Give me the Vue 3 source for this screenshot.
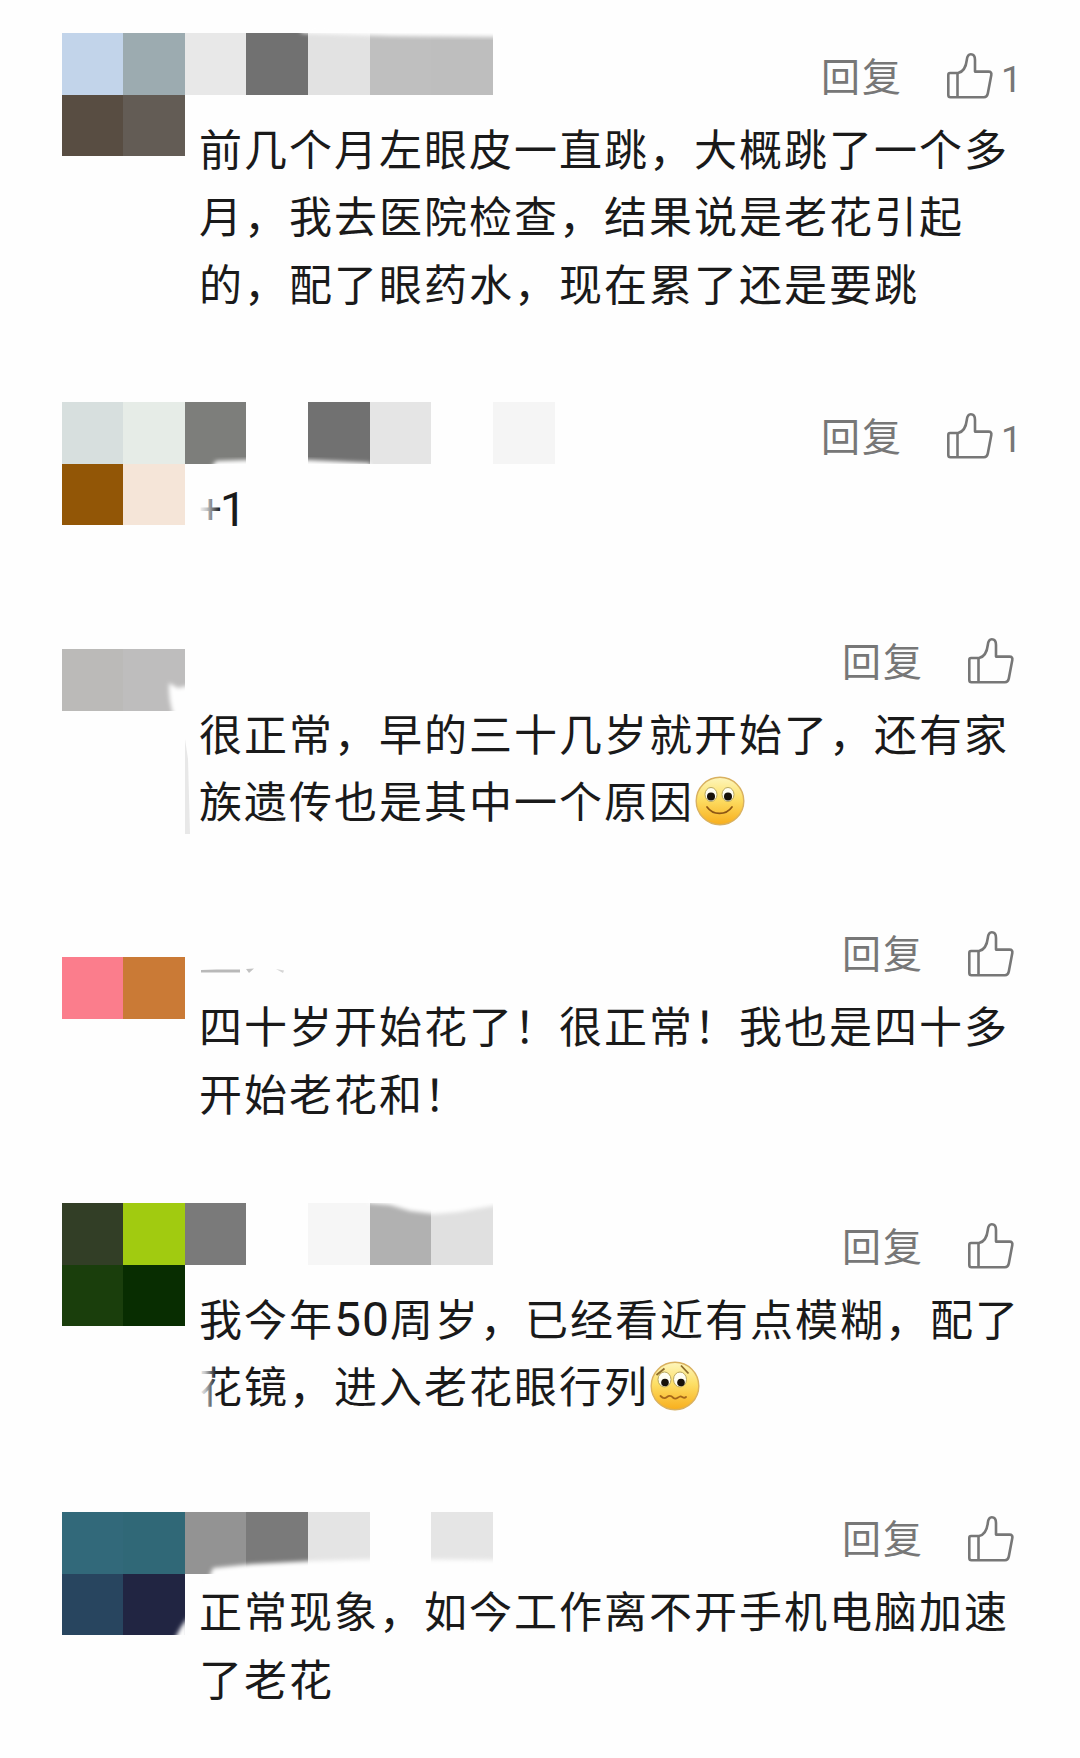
<template>
  <div class="comments">
    <div v-for="comment in comments" :key="comment.id" class="comment">
      <div class="comment-header">
        <span class="reply">回复</span>
        <svg class="icon-like" viewBox="0 0 46 46" fill="none" stroke="currentColor" stroke-width="2.6" stroke-linejoin="round">
          <path d="M3 20H11C16 19 19 14 19.8 7C20.2 3 21.5 1.3 23.8 1.3C26.5 1.3 28 3.500 28 7V18.600H41.500C43.800 18.600 44.700 20 44.300 22L40.800 40.500C40.300 43 39 44.200 37 44.200H3.500C2 44.200 1.300 43.400 1.300 42V22C1.300 20.800 1.800 20 3 20Z" />
          <path d="M10.500 20V44" />
        </svg>
        <span v-if="comment.likes" class="likes">{{ comment.likes }}</span>
      </div>

      <div class="comment-text">
        <div v-for="(line, i) in comment.lines" :key="i" class="line">
          <span v-for="(part, j) in splitDigits(line)" :key="j" :class="partClass(part)">{{ part }}</span>
          <svg v-if="comment.emoji && i === comment.lines.length - 1" class="emoji" viewBox="0 0 50 50" fill="none">
            <defs>
              <linearGradient :id="'face' + comment.id" x1="0" y1="0" x2="0" y2="1">
                <stop offset="0" stop-color="#fdf6bd" />
                <stop offset="0.45" stop-color="#fddf66" />
                <stop offset="1" stop-color="#f8ae1c" />
              </linearGradient>
            </defs>
            <circle cx="25" cy="25" r="23.800" :fill="`url(#face${comment.id})`" stroke="#d9b160" stroke-width="1.400" />
            <template v-if="comment.emoji === 'smile'">
              <ellipse cx="16" cy="18.500" rx="6" ry="7" fill="#fffef2" stroke="#b8a75d" />
              <ellipse cx="33" cy="18.500" rx="6" ry="7" fill="#fffef2" stroke="#b8a75d" />
              <circle cx="16" cy="20.500" r="4" fill="#16110a" />
              <circle cx="33" cy="20.500" r="4" fill="#16110a" />
              <path d="M12 31C18 39.500 31 39.500 37 31" stroke="#8d5615" stroke-width="1.700" stroke-linecap="round" />
            </template>
            <template v-else>
              <ellipse cx="14.500" cy="18.500" rx="6.500" ry="7.500" fill="#fffef2" stroke="#b8a75d" />
              <ellipse cx="30" cy="18.500" rx="6.500" ry="7.500" fill="#fffef2" stroke="#b8a75d" />
              <circle cx="15" cy="21.500" r="3.800" fill="#16110a" />
              <circle cx="31" cy="21.500" r="3.800" fill="#16110a" />
              <path d="M6.500 14L14.500 7.500M31 4.500L38.500 12.500" stroke="#8b6a2b" stroke-width="1.800" />
              <path d="M10.500 35C13 37.500 14.500 38 17 36C19.500 34 21 34.500 23.500 37C26 39 28 36 30 35.500C32.500 35 33.500 38.500 36 36" stroke="#a5671a" stroke-width="1.800" stroke-linecap="round" />
            </template>
          </svg>
        </div>
      </div>

      <!-- Mosaic over the avatar and the user name -->
      <svg class="mosaic" :style="{ top: comment.mosaicTop + 'px' }" viewBox="0 0 500 240">
        <defs>
          <filter :id="'soft' + comment.id" x="-20%" y="-20%" width="140%" height="140%">
            <feGaussianBlur stdDeviation="2" />
          </filter>
          <linearGradient :id="'fade' + comment.id">
            <stop offset="0" stop-color="#fefefe" />
            <stop offset="0.4" stop-color="#fefefe" stop-opacity="0.75" />
            <stop offset="1" stop-color="#fefefe" stop-opacity="0" />
          </linearGradient>
        </defs>
        <g shape-rendering="crispEdges">
          <rect
            v-for="cell in comment.cells"
            :key="cell[0] + '-' + cell[1]"
            :x="edges[cell[0]]"
            :y="cell[1] * 61.500"
            :width="edges[cell[0] + 1] - edges[cell[0]]"
            height="61.500"
            :fill="cell[2]"
          />
        </g>
        <path v-if="comment.wipe" :d="comment.wipe" fill="#fefefe" :filter="`url(#soft${comment.id})`" />
        <rect v-if="comment.fade" v-bind="comment.fade" :fill="`url(#fade${comment.id})`" />
        <path v-for="mark in comment.marks" :key="mark.d" :d="mark.d" :fill="mark.fill" />
      </svg>
    </div>
  </div>
</template>

<script setup>
// Left edges of the mosaic columns
const edges = [0, 61, 123, 184, 246, 308, 369, 431, 493]

// cells: [column, row, color]
const comments = [
  {
    id: 1,
    likes: 1,
    lines: ['前几个月左眼皮一直跳，大概跳了一个多', '月，我去医院检查，结果说是老花引起', '的，配了眼药水，现在累了还是要跳'],
    mosaicTop: -4.5,
    cells: [
      [0, 0, '#c2d4ea'], [1, 0, '#9cabb0'], [2, 0, '#e8e8e8'], [3, 0, '#717171'],
      [4, 0, '#e2e2e2'], [5, 0, '#bfbfbf'], [6, 0, '#bebebe'],
      [0, 1, '#584d42'], [1, 1, '#635c55']
    ],
    wipe: 'M235 -8H440V4L330 3L240 0Z'
  },
  {
    id: 2,
    likes: 1,
    lines: ['+1'],
    mosaicTop: 4.5,
    cells: [
      [0, 0, '#d7dfde'], [1, 0, '#e6ece7'], [2, 0, '#7d7e7b'], [4, 0, '#717171'],
      [5, 0, '#e5e5e5'], [7, 0, '#f5f5f5'],
      [0, 1, '#925606'], [1, 1, '#f5e5d8']
    ],
    wipe: 'M149 66L154 59L184 58H246L308 61L310 72H149Z',
    fade: { x: 136, y: 90, width: 22, height: 42 }
  },
  {
    id: 3,
    likes: 0,
    lines: ['很正常，早的三十几岁就开始了，还有家', '族遗传也是其中一个原因'],
    emoji: 'smile',
    mosaicTop: 26.5,
    cells: [[0, 0, '#bbbab8'], [1, 0, '#bebdbd']],
    wipe: 'M107 34L116 39L129 36V68H112Q106 50 107 34Z',
    marks: [{ d: 'M123 90L126 110L128 185H123Z', fill: '#e8e8e8' }]
  },
  {
    id: 4,
    likes: 0,
    lines: ['四十岁开始花了！很正常！我也是四十多', '开始老花和！'],
    mosaicTop: 42,
    cells: [[0, 0, '#fb7d8c'], [1, 0, '#ca7a36']],
    marks: [
      { d: 'M139 13L155 12.500H178V15.500H139Z', fill: '#b9b9b9' },
      { d: 'M184 12L192 11.500L187 16Z', fill: '#c2c2c2' },
      { d: 'M214 12L222 13.500L221 16Z', fill: '#d6d6d6' }
    ]
  },
  {
    id: 5,
    likes: 0,
    lines: ['我今年50周岁，已经看近有点模糊，配了', '花镜，进入老花眼行列'],
    emoji: 'worried',
    mosaicTop: -4.5,
    cells: [
      [0, 0, '#323e26'], [1, 0, '#a1cb10'], [2, 0, '#7a7a7a'], [4, 0, '#f6f6f6'],
      [5, 0, '#b1b1b1'], [6, 0, '#e0e0e0'],
      [0, 1, '#1a3e0c'], [1, 1, '#082d01']
    ],
    wipe: 'M306 -10V0L328 2L348 8L372 11L396 9L436 2V-10Z',
    fade: { x: 136, y: 158, width: 18, height: 50 }
  },
  {
    id: 6,
    likes: 0,
    lines: ['正常现象，如今工作离不开手机电脑加速', '了老花'],
    mosaicTop: 12,
    cells: [
      [0, 0, '#32697a'], [1, 0, '#306877'], [2, 0, '#939393'], [3, 0, '#7a7a7a'],
      [4, 0, '#e4e4e4'], [6, 0, '#e5e5e5'],
      [0, 1, '#28455f'], [1, 1, '#212542']
    ],
    wipe: 'M145 70L151 56L190 52L250 49L320 47L440 48V70ZM112 128L119 115L126 105V128Z'
  }
]

function splitDigits(line) {
  return line.split(/([0-9]+|\+)/).filter(Boolean)
}

function partClass(part) {
  if (part === '+') return 'plus'
  return /^[0-9]+$/.test(part) ? 'digits' : ''
}
</script>

<style>
body {
  background: #fefefe;
}
</style>

<style scoped>
.comments {
  box-sizing: border-box;
  height: 1758px;
  padding: 37.5px 60px 0 199px;
  overflow: hidden;
  background: #fefefe;
  font-family: 'Noto Sans CJK SC', sans-serif;
}

.comment {
  position: relative;
  padding-bottom: 81.5px;
}

.comment-header {
  display: flex;
  align-items: center;
  justify-content: flex-end;
  height: 76px;
  padding-right: 6px;
  color: #777;
}

.reply {
  margin-top: -3px;
  margin-right: 44px;
  font-size: 39px;
  letter-spacing: 2px;
  line-height: 1;
}

.icon-like {
  width: 46px;
  height: 46px;
  margin-top: 1px;
}

.likes {
  width: 21px;
  margin-top: 7px;
  margin-left: 8px;
  margin-right: -8px;
  font-family: Roboto, sans-serif;
  font-size: 37px;
  line-height: 1;
}

.comment-text {
  color: #1a1a1a;
  font-size: 43px;
  letter-spacing: 2px;
}

.line {
  display: flex;
  align-items: center;
  height: 67.5px;
  line-height: 67.5px;
  white-space: nowrap;
}

.digits {
  margin-top: 4px;
  font-family: Roboto, sans-serif;
  font-size: 48px;
  letter-spacing: 1px;
}

.plus {
  margin-top: 4px;
  margin-right: -2px;
  font-family: Roboto, sans-serif;
  font-size: 40px;
  letter-spacing: 0;
}

.emoji {
  width: 50px;
  height: 50px;
  margin-top: 2px;
  margin-left: 1px;
}

.mosaic {
  position: absolute;
  left: -137px;
  width: 500px;
  height: 240px;
  overflow: visible;
}
</style>
